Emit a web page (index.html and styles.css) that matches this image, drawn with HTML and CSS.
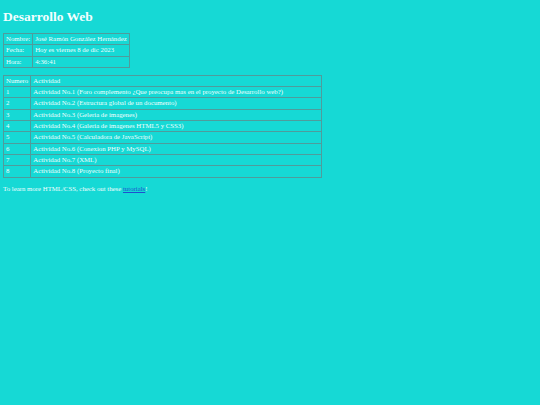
FILE: index.html
```html
<!DOCTYPE html>
<html lang="es">

<head>
    <meta charset="UTF-8">
    <meta name="viewport" content="width=device-width, initial-scale=1.0">
    <title>Desarrollo Web</title>
    <link rel="stylesheet" href="styles.css">
</head>

<body>
    <h1>Desarrollo Web</h1>

    <table class="info">
        <tr>
            <td>Nombre:</td>
            <td>José Ramón González Hernández</td>
        </tr>
        <tr>
            <td>Fecha:</td>
            <td>Hoy es viernes 8 de dic 2023</td>
        </tr>
        <tr>
            <td>Hora:</td>
            <td>4:36:41</td>
        </tr>
    </table>

    <table class="actividades">
        <tr>
            <td>Numero</td>
            <td>Actividad</td>
        </tr>
        <tr><td>1</td><td>Actividad No.1 (Foro complemento ¿Que preocupa mas en el proyecto de Desarrollo web?)</td></tr>
        <tr><td>2</td><td>Actividad No.2 (Estructura global de un documento)</td></tr>
        <tr><td>3</td><td>Actividad No.3 (Geleria de imagenes)</td></tr>
        <tr><td>4</td><td>Actividad No.4 (Galeria de imagenes HTML5 y CSS3)</td></tr>
        <tr><td>5</td><td>Actividad No.5 (Calculadora de JavaScript)</td></tr>
        <tr><td>6</td><td>Actividad No.6 (Conexion PHP y MySQL)</td></tr>
        <tr><td>7</td><td>Actividad No.7 (XML)</td></tr>
        <tr><td>8</td><td>Actividad No.8 (Proyecto final)</td></tr>
    </table>

    <p>To learn more HTML/CSS, check out these <a href="#">tutorials</a>!</p>
</body>

</html>
```

FILE: styles.css
```css
body {
    font-family: "Liberation Serif", serif;
    font-size: 6.8px;
    background-color: #16d9d5;
    color: #f2ffff;
    margin: 0;
    padding: 9px 3px 0;
}

h1 {
    font-size: 13.5px;
    line-height: 16px;
    margin: 0 0 8px;
}

table {
    border-collapse: collapse;
    border: 1px solid #4f9c9c;
    margin-bottom: 7px;
}

td {
    border: 1px solid #4f9c9c;
    padding: 1px 2px;
    line-height: 8.3px;
    white-space: nowrap;
}

.actividades td:last-child {
    padding-right: 38px;
}

p {
    margin: 0;
    line-height: 8px;
}

a {
    color: #1f4fcf;
}
```
